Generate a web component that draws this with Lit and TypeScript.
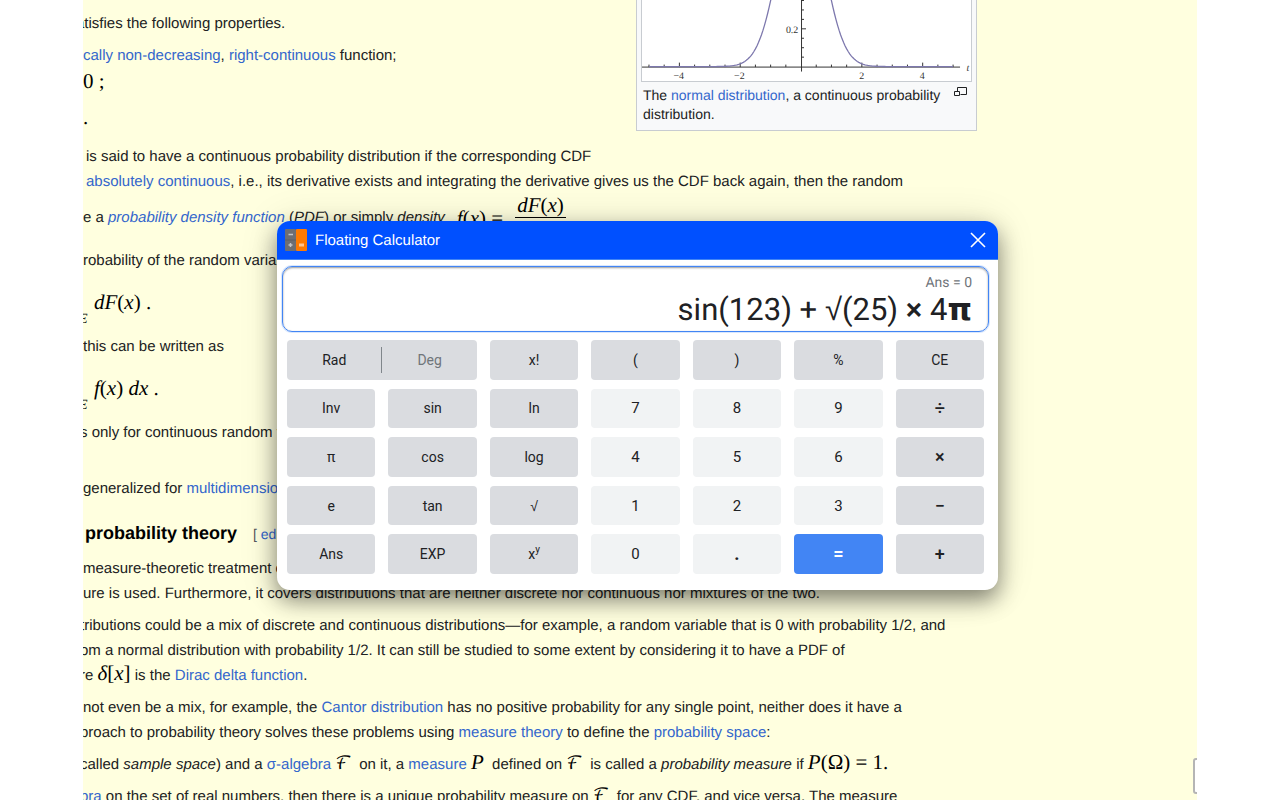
import { LitElement, html, svg, css } from "lit";
import { customElement, state } from "lit/decorators.js";

@customElement("density-chart")
class DensityChart extends LitElement {
  static styles = css`
    :host { display: block; }
    svg { display: block; width: 100%; height: auto; }
    .axis { stroke: #333; stroke-width: 1; fill: none; }
    .curve { stroke: #7d78ad; stroke-width: 1.3; fill: none; }
    .label { font: 10px "Liberation Serif", serif; fill: #333; text-anchor: middle; }
    .name { font-style: italic; }
  `;

  private x(v: number) { return 160 + v * 30.6; }
  private y(v: number) { return 67 - v * 190; }

  private curvePath() {
    const points: string[] = [];
    for (let v = -5; v <= 5.001; v += 0.05) {
      const d = Math.exp(-(v * v) / 0.95);
      points.push(`${this.x(v).toFixed(2)},${this.y(d).toFixed(2)}`);
    }
    return "M" + points.join("L");
  }

  render() {
    const xs = Array.from({ length: 21 }, (_, i) => -5 + i * 0.5).filter((v) => v !== 0);
    const ys = [0.05, 0.1, 0.15, 0.2, 0.25, 0.3, 0.35];
    return html`<svg viewBox="0 0 331 81" role="img" aria-label="Normal distribution density">
      ${xs.map((v) => svg`<line class="axis" x1=${this.x(v)} x2=${this.x(v)} y1="67.5" y2=${v % 2 === 0 ? 63 : 65}></line>`)}
      ${ys.map((v) => svg`<line class="axis" x1="160" x2=${v === 0.2 ? 165 : 163} y1=${this.y(v)} y2=${this.y(v)}></line>`)}
      <line class="axis" x1="0" x2="320" y1="67.5" y2="67.5"></line>
      <line class="axis" x1="160.5" x2="160.5" y1="0" y2="72"></line>
      <path class="curve" d=${this.curvePath()}></path>
      <text class="label" x="151" y="33">0.2</text>
      <text class="label" x="37" y="79">−4</text>
      <text class="label" x="98" y="79">−2</text>
      <text class="label" x="221" y="79">2</text>
      <text class="label" x="282" y="79">4</text>
      <text class="label name" x="328" y="71">t</text>
    </svg>`;
  }
}

@customElement("wiki-article")
class WikiArticle extends LitElement {
  static styles = css`
    :host {
      display: block;
      box-sizing: border-box;
      padding: 0 220px 0 0;
      font: 15px/25px "Liberation Sans", Arial, sans-serif;
      text-rendering: geometricPrecision;
      color: #202122;
      white-space: nowrap;
    }
    a { color: #36c; text-decoration: none; }
    .top { display: flex; justify-content: space-between; height: 144px; }
    .intro { padding-top: 11px; }
    p { margin: 0 0 7px; }
    .item { margin: 0; }
    .cut1 { margin-left: -3px; }
    .cut2 { margin-left: -7px; }
    .in { padding-left: 3px; }
    .m { font: 21px/20px "Liberation Serif", serif; color: #000; }
    .row { height: 27px; line-height: 27px; margin: 0; }
    .dot { margin: 12px 0 0; }
    .tight { margin-bottom: 0; }
    .eq { display: flex; align-items: center; height: 47px; gap: 12px; margin-bottom: 7px; }
    .frac { display: inline-flex; flex-direction: column; text-align: center; }
    .frac .num { border-bottom: 1px solid #000; padding: 0 2px; line-height: 24px; }
    .frac .den { line-height: 24px; }
    .display { display: flex; align-items: center; box-sizing: border-box; height: 61px; margin: 0; padding-bottom: 4px; }
    .sub { font-size: 14px; align-self: flex-end; width: 11px; margin-left: -4px; padding-right: 4px; }
    .script { font: 18px/20px "DejaVu Math TeX Gyre", "DejaVu Serif", serif; color: #000; margin-right: 3px; }
    .far { margin-bottom: 31px; }
    h3 {
      display: flex; align-items: baseline; gap: 16px;
      margin: -14px 0 8px; padding-left: 2px; height: 30px;
      font-size: 18px; line-height: 30px; color: #000;
    }
    h3 .edit { font-size: 14px; font-weight: 400; color: #54595d; }
    figure {
      margin: 0; box-sizing: border-box; width: 341px; height: 131px;
      padding: 0 4px; border: 1px solid #c8ccd1; border-top: 0;
      background: #f8f9fa;
    }
    .image { background: #fff; border: 1px solid #c8ccd1; border-top: 0; }
    figcaption {
      display: flex; justify-content: space-between;
      padding: 4px 5px 0 2px; font-size: 14px; line-height: 19px; white-space: normal;
    }
    .magnify { flex: none; width: 14px; height: 12px; }
  `;

  render() {
    return html`
      <div class="top">
        <div class="intro">
          <p class="cut2">atisfies the following properties.</p>
          <p class="item"><a href="#">cally non-decreasing</a>, <a href="#">right-continuous</a> function;</p>
          <p class="row m cut1">0 ;</p>
          <p class="dot m">.</p>
        </div>
        <figure>
          <div class="image"><density-chart></density-chart></div>
          <figcaption>
            <span>The <a href="#">normal distribution</a>, a continuous probability distribution.</span>
            <svg class="magnify" viewBox="0 0 14 12" fill="none" stroke="#202122"><path d="M4.500 5V1.500H13.500V8.500H7.500M1.500 5.500H6.500V9.500H1.500Z"></path></svg>
          </figcaption>
        </figure>
      </div>
      <p class="tight in">is said to have a continuous probability distribution if the corresponding CDF</p>
      <p class="tight in"><a href="#">absolutely continuous</a>, i.e., its derivative exists and integrating the derivative gives us the CDF back again, then the random</p>
      <div class="eq">
        <span>e a <a href="#"><i>probability density function</i></a> (<i>PDF</i>) or simply <i>density</i></span>
        <span class="m"><i>f</i>(<i>x</i>) =</span>
        <span class="frac m"><span class="num"><i>dF</i>(<i>x</i>)</span><span class="den"><i>dx</i></span></span>
      </div>
      <p class="tight">robability of the random variable being in a set</p>
      <div class="display m"><span class="sub"><i>E</i></span><span><i>dF</i>(<i>x</i>) .</span></div>
      <p class="tight">this can be written as</p>
      <div class="display m"><span class="sub"><i>E</i></span><span><i>f</i>(<i>x</i>) <i>dx</i> .</span></div>
      <p class="far cut1">s only for continuous random variables.</p>
      <p class="far">generalized for <a href="#">multidimensional</a> variables.</p>
      <h3>probability theory <span class="edit">[ <a href="#">edit</a> ]</span></h3>
      <p>measure-theoretic treatment of probability<br>ure is used. Furthermore, it covers distributions that are neither discrete nor continuous nor mixtures of the two.</p>
      <p class="cut1">tributions could be a mix of discrete and continuous distributions—for example, a random variable that is 0 with probability 1/2, and<br>om a normal distribution with probability 1/2. It can still be studied to some extent by considering it to have a PDF of<br>re <span class="m"><i>δ</i>[<i>x</i>]</span> is the <a href="#">Dirac delta function</a>.</p>
      <p class="tight">not even be a mix, for example, the <a href="#">Cantor distribution</a> has no positive probability for any single point, neither does it have a</p>
      <p class="cut1">proach to probability theory solves these problems using <a href="#">measure theory</a> to define the <a href="#">probability space</a>:</p>
      <p class="cut1">called <i>sample space</i>) and a <a href="#">σ-algebra</a> <span class="script">ℱ</span> on it, a <a href="#">measure</a> <span class="m"><i>P</i></span> &nbsp;defined on <span class="script">ℱ</span> is called a <i>probability measure</i> if <span class="m"><i>P</i>(Ω) = 1.</span></p>
      <p class="cut1"><a href="#">bra</a> on the set of real numbers, then there is a unique probability measure on <span class="script">ℱ</span> for any CDF, and vice versa. The measure</p>
    `;
  }
}

type Key = { label: unknown; kind?: string };

@customElement("floating-calculator")
class FloatingCalculator extends LitElement {
  static styles = css`
    :host {
      display: block;
      border-radius: 13px;
      background: #fff;
      overflow: hidden;
      box-shadow: 0 10px 22px rgba(0, 0, 0, 0.45), 0 2px 40px rgba(0, 0, 0, 0.12);
      color: #202124;
      text-rendering: geometricPrecision;
    }
    header {
      display: flex; align-items: center; gap: 8px;
      height: 38px; padding: 0 12px 0 8px;
      background: #0050ff; border-bottom: 1px solid #4285f4; color: #fff;
      font: 15px/20px "Liberation Sans", Arial, sans-serif;
    }
    header h1 { flex: 1; margin: 0; padding-top: 2px; font: inherit; }
    .logo { width: 22px; height: 22px; }
    button { border: 0; padding: 0; margin: 0; font: inherit; color: inherit; cursor: pointer; }
    .close { width: 16px; height: 16px; background: none; }
    .close svg { display: block; }
    .screen {
      display: flex; flex-direction: column; align-items: flex-end;
      box-sizing: border-box; height: 66px; margin: 6px 9px 8px 5px; padding: 7px 16px 0;
      border: 1px solid #4285f4; border-radius: 10px;
      box-shadow: inset 0 1px 2px rgba(32, 33, 36, 0.45), 0 0 0 1px rgba(66, 133, 244, 0.2);
      font-family: Roboto, sans-serif;
    }
    .answer { font-size: 14px; line-height: 18px; color: #70757a; }
    .entry { font-size: 31px; line-height: 36px; }
    .times { font-weight: 500; }
    .root { font-family: "Liberation Sans", sans-serif; line-height: 20px; }
    .pi { font-family: "DejaVu Sans", sans-serif; font-weight: 700; line-height: 20px; }
    .keys {
      display: grid; grid-template-columns: repeat(7, 1fr); grid-template-rows: repeat(5, 1fr);
      gap: 9px 13px; height: 234px; padding: 0 14px 16px 10px;
      font: 14px/20px Roboto, sans-serif;
    }
    .key { border-radius: 4px; background: #dadce0; }
    .digit { background: #f1f3f4; font-size: 15px; }
    .equals { background: #4285f4; color: #fff; }
    .op { font-size: 18px; font-weight: 500; }
    .heavy { font-size: 18px; font-weight: 700; }
    .angle {
      grid-column: span 2; display: grid; grid-template-columns: 1fr 1px 1fr; align-items: center;
      border-radius: 4px; background: #dadce0;
    }
    .angle button { background: none; height: 100%; }
    .angle .off { color: #70757a; }
    .bar { height: 26px; background: #80868b; }
    sup { font-size: 10px; line-height: 10px; }
  `;

  @state() private unit = "Rad";

  private keys: Key[] = [
    { label: "x!" }, { label: "(" }, { label: ")" }, { label: "%" }, { label: "CE" },
    { label: "Inv" }, { label: "sin" }, { label: "ln" },
    { label: "7", kind: "digit" }, { label: "8", kind: "digit" }, { label: "9", kind: "digit" }, { label: "÷", kind: "op" },
    { label: "π" }, { label: "cos" }, { label: "log" },
    { label: "4", kind: "digit" }, { label: "5", kind: "digit" }, { label: "6", kind: "digit" }, { label: "×", kind: "op" },
    { label: "e" }, { label: "tan" }, { label: html`<span class="root">√</span>` },
    { label: "1", kind: "digit" }, { label: "2", kind: "digit" }, { label: "3", kind: "digit" }, { label: "−", kind: "op" },
    { label: "Ans" }, { label: "EXP" }, { label: html`x<sup>y</sup>` },
    { label: "0", kind: "digit" }, { label: ".", kind: "digit heavy" }, { label: "=", kind: "equals heavy" }, { label: "+", kind: "op" },
  ];

  render() {
    return html`
      <header>
        <svg class="logo" viewBox="0 0 22 22" aria-hidden="true">
          <rect width="11" height="22" rx="1" fill="#6e6e73"></rect>
          <rect x="11" width="11" height="22" rx="1" fill="#ff7a00"></rect>
          <path d="M0 11H11" stroke="#5f5f64"></path>
          <path d="M3.500 5.500H8M3.500 16H7.500M5.500 14V18" stroke="#c4c4c8" stroke-width="1.500"></path>
          <path d="M14 16H19" stroke="#ffc48f" stroke-width="3"></path>
        </svg>
        <h1>Floating Calculator</h1>
        <button class="close" aria-label="Close"><svg width="16" height="16" viewBox="0 0 16 16"><path d="M1 1L15 15M15 1L1 15" stroke="#fff" stroke-width="1.600"></path></svg></button>
      </header>
      <div class="screen">
        <div class="answer">Ans = 0</div>
        <output class="entry">sin(123) + <span class="root">√</span>(25) <span class="times">×</span> 4<span class="pi">π</span></output>
      </div>
      <div class="keys">
        <div class="angle">
          <button class=${this.unit === "Rad" ? "" : "off"} @click=${() => (this.unit = "Rad")}>Rad</button>
          <span class="bar"></span>
          <button class=${this.unit === "Deg" ? "" : "off"} @click=${() => (this.unit = "Deg")}>Deg</button>
        </div>
        ${this.keys.map((k) => html`<button class="key ${k.kind ?? ""}">${k.label}</button>`)}
      </div>
    `;
  }
}

@customElement("app-root")
class AppRoot extends LitElement {
  static styles = css`
    :host { display: block; height: 100vh; overflow: hidden; background: #fff; }
    .page { position: relative; height: 100%; margin: 0 83px; overflow: hidden; background: #ffffdf; }
    .window { position: absolute; left: 194px; top: 221px; width: 721px; }
    .corner {
      position: absolute; right: -8px; bottom: 6px; width: 8px; height: 32px;
      border: 2px solid #b5b5b5; border-radius: 3px; background: #fff;
    }
  `;

  render() {
    return html`<main class="page">
      <wiki-article></wiki-article>
      <div class="corner"></div>
      <floating-calculator class="window"></floating-calculator>
    </main>`;
  }
}
